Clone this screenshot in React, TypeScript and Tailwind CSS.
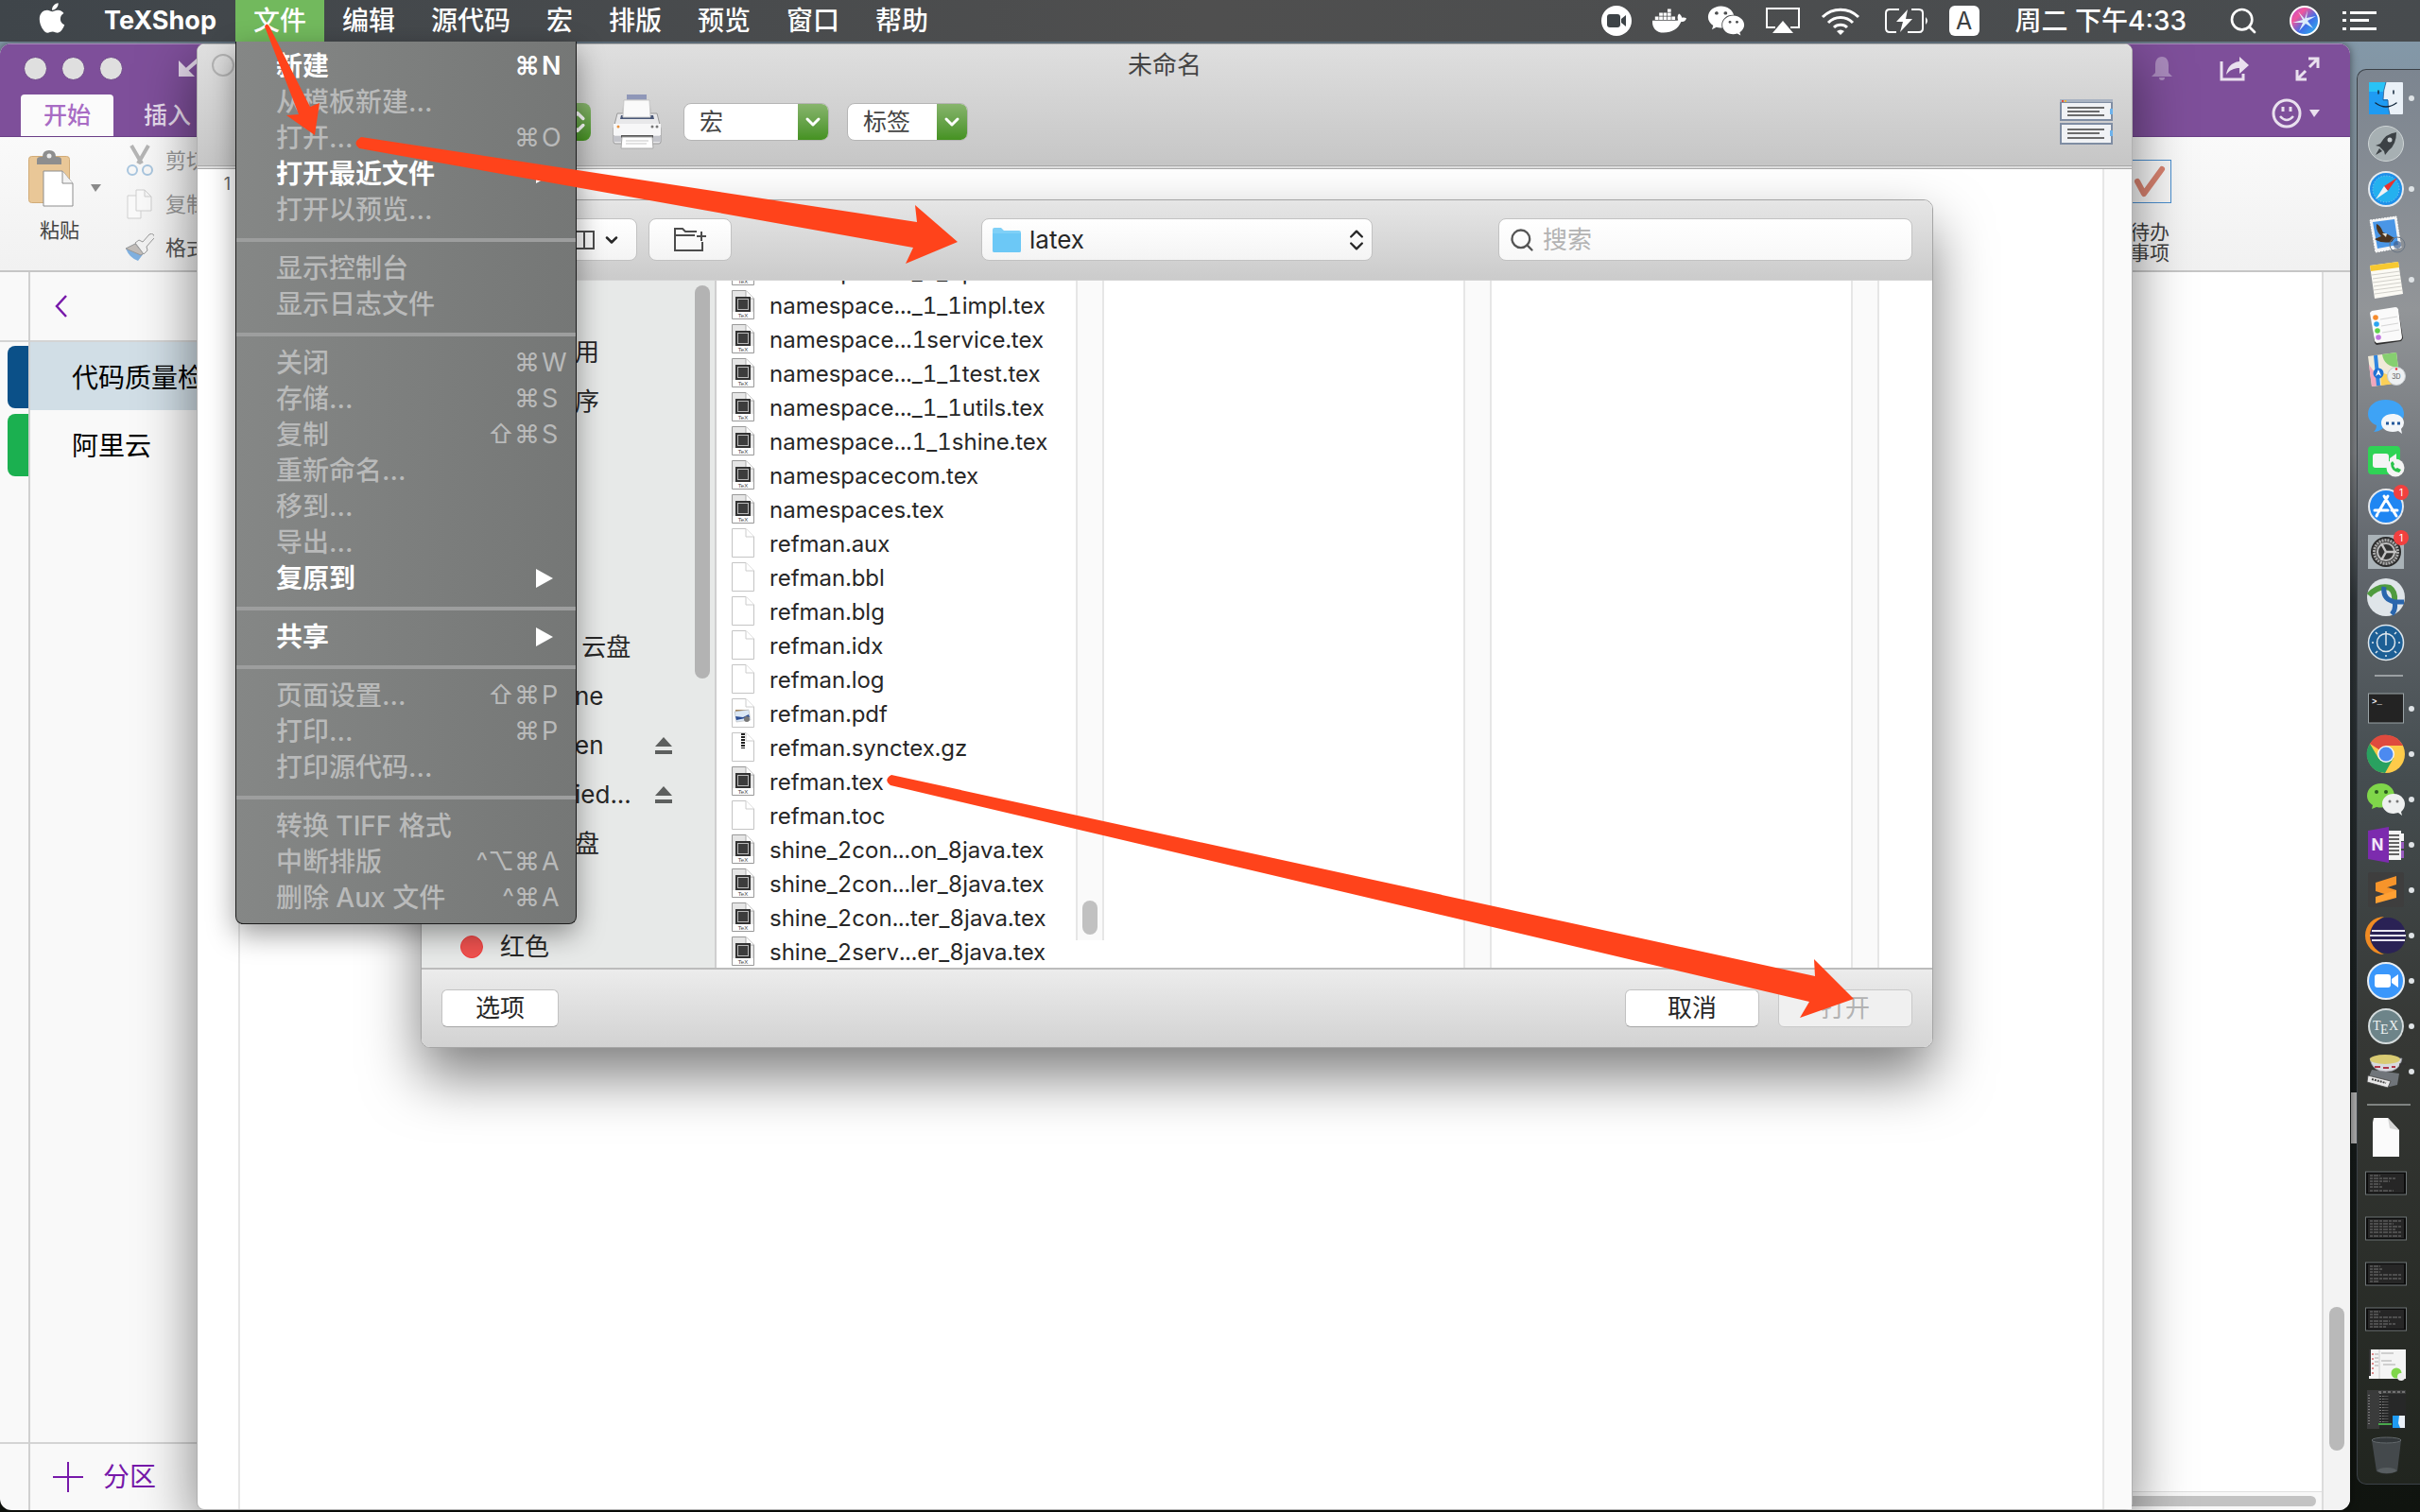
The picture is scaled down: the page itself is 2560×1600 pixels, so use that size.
import React from "react";
import { FaApple, FaDocker, FaWeixin } from "react-icons/fa";
import { ChevronDown, ChevronsUpDown, Search } from "lucide-react";

const FONT = "font-['Inter','Noto_Sans_CJK_SC',sans-serif]";

/* ---------- Menu bar ---------- */

const MENUS = ["编辑", "源代码", "宏", "排版", "预览", "窗口", "帮助"];

type Entry = { label: string; mods?: string; letter?: string; on?: boolean; sub?: boolean };

const FILE_MENU: Entry[][] = [
  [
    { label: "新建", mods: "⌘", letter: "N", on: true },
    { label: "从模板新建..." },
    { label: "打开...", mods: "⌘", letter: "O" },
    { label: "打开最近文件", on: true, sub: true },
    { label: "打开以预览..." },
  ],
  [{ label: "显示控制台" }, { label: "显示日志文件" }],
  [
    { label: "关闭", mods: "⌘", letter: "W" },
    { label: "存储...", mods: "⌘", letter: "S" },
    { label: "复制", mods: "⇧⌘", letter: "S" },
    { label: "重新命名..." },
    { label: "移到..." },
    { label: "导出..." },
    { label: "复原到", on: true, sub: true },
  ],
  [{ label: "共享", on: true, sub: true }],
  [
    { label: "页面设置...", mods: "⇧⌘", letter: "P" },
    { label: "打印...", mods: "⌘", letter: "P" },
    { label: "打印源代码..." },
  ],
  [
    { label: "转换 TIFF 格式" },
    { label: "中断排版", mods: "^⌥⌘", letter: "A" },
    { label: "删除 Aux 文件", mods: "^⌘", letter: "A" },
  ],
];

function FileMenu() {
  return (
    <div
      role="menu"
      className="absolute left-0 top-full w-[361px] rounded-b-lg border border-t-0 border-[#1c1c1c] bg-linear-to-r from-[#858786] to-[#757776] pt-[7px] pb-2 shadow-[0_10px_30px_rgba(0,0,0,0.4)]"
    >
      {FILE_MENU.map((group, g) => (
        <div key={g}>
          {g > 0 && <hr className="mt-[11px] mb-[9px] h-1 border-0 bg-[#9d9e9e]" />}
          {group.map((e) => (
            <button
              key={e.label}
              role="menuitem"
              disabled={!e.on}
              className={
                e.on
                  ? "flex h-[38px] w-full items-center pl-[42px] text-left text-[28px] leading-[38px] font-bold text-white"
                  : "flex h-[38px] w-full items-center pl-[42px] text-left text-[28px] leading-[38px] text-[#b9baba]"
              }
            >
              <span className="flex-1 whitespace-nowrap">{e.label}</span>
              {e.letter && (
                <>
                  <span className={e.on ? "text-[27px] font-semibold" : "text-[27px] font-normal"}>{e.mods}</span>
                  <span className={e.on ? "ml-0.5 w-9 text-[27px] font-semibold" : "ml-0.5 w-9 text-[27px] font-normal"}>{e.letter}</span>
                </>
              )}
              {e.sub && (
                <svg viewBox="0 0 18 20" className="mr-6 h-5 w-[18px]">
                  <path d="M0 0 18 10 0 20Z" fill="#fff" />
                </svg>
              )}
            </button>
          ))}
        </div>
      ))}
    </div>
  );
}

function MenuBar() {
  return (
    <header className="relative z-30 flex h-11 items-center bg-linear-to-r from-[#3f454a] via-[#4f4f4f] to-[#474b4e] text-[28px] leading-[44px] whitespace-nowrap text-white">
      <FaApple className="-mt-1.5 ml-[39px] h-9 w-8" />
      <span className="pr-5 pl-[39px] text-[27px] font-bold">TeXShop</span>
      <nav className="flex h-11 font-medium">
        <div className="relative">
          <button className="h-11 bg-[#72b95d] px-[19px]">文件</button>
          <FileMenu />
        </div>
        {MENUS.map((m) => (
          <button key={m} className="h-11 px-[19px]">
            {m}
          </button>
        ))}
      </nav>
      <div className="mr-[46px] ml-auto flex items-center gap-[22px]">
        <svg viewBox="0 0 32 32" className="size-8">
          <circle cx="16" cy="16" r="16" fill="#fff" />
          <rect x="6" y="9" width="14" height="14" rx="3" fill="#3d4347" />
          <path d="M21 14 26 10V22L21 18Z" fill="#3d4347" />
        </svg>
        <FaDocker className="h-9 w-9" />
        <FaWeixin className="h-9 w-10" />
        <svg viewBox="0 0 36 28" className="h-7 w-9" fill="none" stroke="#fff" strokeWidth="2">
          <path d="M10 21H1V1H35V21H26" />
          <path d="M18 14 29 27H7Z" fill="#fff" stroke="none" />
        </svg>
        <svg viewBox="0 0 42 30" className="mr-1 h-[30px] w-[42px]" fill="none" stroke="#fff" strokeWidth="3">
          <path d="M2 11A27 27 0 0 1 40 11" />
          <path d="M8 17A18 18 0 0 1 34 17" />
          <path d="M14 22A10 10 0 0 1 28 22" />
          <path d="M17 26Q21 23 25 26L21 30Z" fill="#fff" stroke="none" />
        </svg>
        <svg viewBox="0 0 46 26" className="h-[26px] w-[46px]" fill="none" stroke="#fff" strokeWidth="2">
          <path d="M15 1H5Q1 1 1 5V21Q1 25 5 25H12M28 1H36Q40 1 40 5V21Q40 25 36 25H24" />
          <path d="M24 1 12 14H19L16 25 29 11H22Z" fill="#fff" stroke="none" />
          <path d="M43 9Q47 13 43 17Z" fill="#fff" stroke="none" />
        </svg>
        <span className="flex size-8 items-center justify-center rounded-md bg-white text-[25px] text-[#3c3f41]">A</span>
        <time className="ml-4 font-medium">周二 下午4:33</time>
        <Search className="ml-[22px] size-8" strokeWidth={2} />
        <svg viewBox="0 0 32 32" className="mr-0.5 ml-[11px] size-8">
          <defs>
            <linearGradient id="siri" x1="0" y1="0" x2="1" y2="1">
              <stop offset="0" stopColor="#b44be0" />
              <stop offset="0.3" stopColor="#f0569c" />
              <stop offset="0.6" stopColor="#3d6fe8" />
              <stop offset="1" stopColor="#2cc3e8" />
            </linearGradient>
          </defs>
          <circle cx="16" cy="16" r="15" fill="url(#siri)" stroke="#fff" strokeWidth="2" />
          <path d="M16 14 9 6 14 15 3 18 14 18 10 27 17 19 25 24 19 16 28 11 18 13 19 5Z" fill="#e8fbff" opacity="0.9" />
        </svg>
        <svg viewBox="0 0 36 20" className="h-5 w-9">
          <path d="M0 0H4V3H0ZM8 0H36V3H8ZM0 8H4V11H0ZM8 8H28V11H8ZM0 17H4V20H0ZM8 17H36V20H8Z" fill="#fff" />
        </svg>
      </div>
    </header>
  );
}

/* ---------- OneNote window ---------- */

function NotesWindow() {
  return (
    <section className="absolute top-0.5 right-[74px] bottom-0.5 left-0 flex flex-col overflow-hidden rounded-xl bg-[#f9f9f9] shadow-[0_0_10px_rgba(0,0,0,0.5)]">
      <div className="flex h-[99px] justify-between border-t border-[#a98abc] border-b border-b-[#6a3f87] bg-[#7e4f9a]">
        <div className="flex flex-col justify-between">
          <div className="flex h-[50px] items-center gap-[15px] pl-[25px]">
            <span className="size-[25px] rounded-full border border-[#6c4387] bg-[#dfdfdf]" />
            <span className="size-[25px] rounded-full border border-[#6c4387] bg-[#dfdfdf]" />
            <span className="size-[25px] rounded-full border border-[#6c4387] bg-[#dfdfdf]" />
            <svg viewBox="0 0 22 20" className="ml-11 h-5 w-[22px]" fill="none" stroke="#e4d9ea" strokeWidth="4">
              <path d="M22 0 6 14" />
              <path d="M0 2V19H17Z" fill="#e4d9ea" stroke="none" />
            </svg>
          </div>
          <div className="flex h-11 pl-[22px] text-[25px] leading-[44px] font-medium">
            <button className="w-[98px] rounded-t bg-[#fbfbfb] text-[#a86cc4]">开始</button>
            <button className="w-[114px] text-[#e6dbec]">插入</button>
          </div>
        </div>
        <div className="flex flex-col items-end pt-[13px] pr-8">
          <div className="flex items-center gap-[49px]">
            <svg viewBox="0 0 24 26" className="h-[26px] w-6" fill="#a98abc">
              <path d="M12 0C7 0 5 4 5 9V17L1 21H23L19 17V9C19 4 17 0 12 0ZM9 22H15A3 3 0 0 1 9 22Z" />
            </svg>
            <svg viewBox="0 0 31 26" className="h-[26px] w-[31px]" fill="none" stroke="#e9e0ee" strokeWidth="3">
              <path d="M2 5V24H25V18" />
              <path d="M31 9 21 0V5C12 6 8 12 7 19 11 14 15 12 21 12V18Z" fill="#e9e0ee" stroke="none" />
            </svg>
            <svg viewBox="0 0 26 26" className="h-[26px] w-[26px]" fill="none" stroke="#e9e0ee" strokeWidth="3">
              <path d="M14 2H24V12M24 2 15 11M2 14V24H12M2 24 11 15" />
            </svg>
          </div>
          <div className="mt-[18px] flex items-center gap-2">
            <svg viewBox="0 0 32 32" className="size-8" fill="none" stroke="#e9e0ee" strokeWidth="3">
              <circle cx="16" cy="16" r="14" />
              <path d="M12 9V14M20 9V14" />
              <path d="M9 19Q16 27 23 19" strokeWidth="2.5" />
            </svg>
            <svg viewBox="0 0 11 8" className="h-2 w-[11px]">
              <path d="M0 0H11L5 8Z" fill="#e9e0ee" />
            </svg>
          </div>
        </div>
      </div>

      <div className="flex h-[143px] justify-between border-b-2 border-[#c6c6c6] bg-linear-to-b from-[#fafafa] to-[#f1f1f1]">
        <div className="flex">
          <button className="flex flex-col items-center pt-3.5 pl-[30px] text-[21px] leading-8 text-[#444]">
            <span className="flex items-center gap-[18px]">
              <svg viewBox="0 0 48 60" className="h-[60px] w-12">
                <rect x="0.5" y="6.500" width="43" height="49" rx="3" fill="#e9c797" stroke="#d1ab77" />
                <path d="M9 15V10Q9 7 13 7H15Q15 0 22 0T29 7H31Q35 7 35 10V15Z" fill="#8e8e8e" />
                <circle cx="22" cy="6" r="2.500" fill="#eee" />
                <path d="M16 22H36L47 35V59H16Z" fill="#fff" stroke="#8d8d8d" />
                <path d="M36 22V35H47" fill="#f3f3f3" stroke="#8d8d8d" />
              </svg>
              <svg viewBox="0 0 11 8" className="mt-5 h-2 w-[11px]">
                <path d="M0 0H11L5 8Z" fill="#8a8a8a" />
              </svg>
            </span>
            <span className="mt-[9px] w-full pl-3 text-left">粘贴</span>
          </button>
          <div className="flex flex-col pt-0.5 pl-[26px] text-[22px] leading-[46px] text-[#9a9a9a]">
            <button className="flex items-center gap-3">
              <svg viewBox="0 0 30 34" className="h-[34px] w-[30px]" fill="none">
                <path d="M6 1 17 20M24 1 13 20" stroke="#b5b5b5" strokeWidth="4" />
                <circle cx="7" cy="27" r="5" stroke="#a9c6df" strokeWidth="2" />
                <circle cx="23" cy="27" r="5" stroke="#a9c6df" strokeWidth="2" />
              </svg>
              剪切
            </button>
            <button className="flex items-center gap-3">
              <svg viewBox="0 0 30 34" className="h-[34px] w-[30px]" fill="#fafafa" stroke="#cfcfcf">
                <path d="M2 8H16V32H2Z" />
                <path d="M11 2H20L27 9V24H11ZM20 2V9H27" />
              </svg>
              复制
            </button>
            <button className="flex items-center gap-3 text-[#555]">
              <svg viewBox="0 0 30 30" className="h-[30px] w-[30px]">
                <path d="M0 16 10 11 19 21 13 29Q4 26 0 16Z" fill="#7fb0e0" />
                <path d="M0 16 10 11 19 21 16 23Z" fill="#c2bdb9" stroke="#999" />
                <path d="M10 10 14 7 18 9 25 1Q28 -1 30 2T29 6L22 14 23 18 19 22Z" fill="#f2f2f2" stroke="#999" />
              </svg>
              格式
            </button>
          </div>
        </div>
        <button className="mr-[189px] flex flex-col items-end pt-6 text-[21px] leading-[22px] text-[#3f3f3f]">
          <svg viewBox="0 0 46 46" className="mb-5 size-[46px]" fill="none">
            <rect x="0.5" y="0.5" width="45" height="45" fill="#f7f7f7" stroke="#4a8fd0" />
            <path d="M10 23 17 36 36 10" stroke="#d98370" strokeWidth="6" strokeLinecap="round" strokeLinejoin="round" />
          </svg>
          <span className="mr-0.5">待办</span>
          <span className="mr-0.5">事项</span>
        </button>
      </div>

      <div className="flex min-h-0 flex-1">
        <div className="flex w-8 flex-col items-end border-r-2 border-[#d0d0d0]">
          <span className="mb-1 h-[74px] w-full border-b-2 border-[#d4d4d4]" />
          <span className="mb-1.5 h-[66px] w-[22px] rounded-l-lg bg-[#0b5088]" />
          <span className="h-[66px] w-[22px] rounded-l-lg bg-[#1bb050]" />
          <span className="mt-auto h-[72px] w-full border-t-2 border-[#d4d4d4]" />
        </div>
        <div className="flex w-[400px] flex-col text-[28px] leading-[76px] text-black">
          <div className="flex h-[74px] items-center border-b-2 border-[#d4d4d4] pl-[26px]">
            <svg viewBox="0 0 14 24" className="h-6 w-3.5" fill="none" stroke="#7719aa" strokeWidth="2.500">
              <path d="M12 1 2 12 12 23" />
            </svg>
          </div>
          <button className="h-[72px] w-full bg-[#d1dee6] pl-11 text-left whitespace-nowrap">代码质量检</button>
          <button className="h-[72px] w-full pl-11 text-left">阿里云</button>
          <button className="mt-auto flex h-[72px] items-center gap-5 border-t-2 border-[#d4d4d4] pl-[23px] text-[#7719aa]">
            <svg viewBox="0 0 34 34" className="size-[34px]" stroke="#7719aa" strokeWidth="2">
              <path d="M17 1V33M1 17H33" />
            </svg>
            分区
          </button>
        </div>
        <div className="flex flex-1 flex-col bg-white">
          <div className="flex-1" />
          <div className="flex h-5 items-center justify-end border-t border-[#e0e0e0] bg-[#f8f8f8] pr-1.5">
            <span className="h-[11px] w-[500px] rounded-full bg-[#c3c3c3]" />
          </div>
        </div>
        <div className="flex w-[30px] flex-col items-center justify-end border-l-2 border-[#dcdcdc] bg-[#f3f3f3] pb-[63px]">
          <span className="h-[152px] w-4 rounded-full bg-[#b9b9b9]" />
        </div>
      </div>
    </section>
  );
}

/* ---------- Open dialog ---------- */

const FILES: [string, string][] = [
  ["namespace..._1_1port.tex", "tex"],
  ["namespace..._1_1impl.tex", "tex"],
  ["namespace...1service.tex", "tex"],
  ["namespace..._1_1test.tex", "tex"],
  ["namespace..._1_1utils.tex", "tex"],
  ["namespace...1_1shine.tex", "tex"],
  ["namespacecom.tex", "tex"],
  ["namespaces.tex", "tex"],
  ["refman.aux", "doc"],
  ["refman.bbl", "doc"],
  ["refman.blg", "doc"],
  ["refman.idx", "doc"],
  ["refman.log", "doc"],
  ["refman.pdf", "pdf"],
  ["refman.synctex.gz", "zip"],
  ["refman.tex", "tex"],
  ["refman.toc", "doc"],
  ["shine_2con...on_8java.tex", "tex"],
  ["shine_2con...ler_8java.tex", "tex"],
  ["shine_2con...ter_8java.tex", "tex"],
  ["shine_2serv...er_8java.tex", "tex"],
];

function FileIcon({ kind }: { kind: string }) {
  const tex = kind === "tex";
  return (
    <svg viewBox="0 0 24 31" className="-mt-1 h-[31px] w-6 shrink-0">
      <path d="M0.500 0.500H15L23.500 9V30.500H0.500Z" fill={tex ? "#e6e6e6" : "#fff"} stroke={tex ? "#999" : "#c4c4c4"} />
      {tex && <path d="M1 23H23V30H1Z" fill="#fff" />}
      <path d="M15 0.500V9H23.500" fill="#fff" stroke={tex ? "#aaa" : "#ccc"} />
      {tex && (
        <>
          <rect x="4" y="7" width="16" height="16" fill="#333" />
          <rect x="6.500" y="9.500" width="11" height="11" fill="#3c3c3c" stroke="#bbb" />
          <text x="12" y="28.500" fontSize="6" textAnchor="middle" fill="#444" fontFamily="Liberation Sans">
            TeX
          </text>
        </>
      )}
      {kind === "pdf" && (
        <>
          <path d="M4 12H17V15H4Z" fill="#a4865d" />
          <path d="M3 14 18 12 20 23 5 25Z" fill="#dce8f5" stroke="#aaa" strokeWidth="0.500" />
          <path d="M4 19 12 20 18 17 19 20 5 23Z" fill="#2c4d94" />
          <circle cx="16" cy="22" r="3" fill="#777" />
        </>
      )}
      {kind === "zip" && <path d="M12 1V17" stroke="#222" strokeWidth="4" strokeDasharray="2 1" />}
    </svg>
  );
}

const PLACES: [string, boolean][] = [
  ["用", false],
  ["序", false],
  ["", false],
  ["", false],
  ["", false],
  ["", false],
  ["\u00a0云盘", false],
  ["ne", false],
  ["en", true],
  ["ied...", true],
  ["盘", false],
];

function OpenDialog() {
  return (
    <div
      role="dialog"
      aria-label="打开"
      className="absolute top-[164px] right-[210px] left-[236px] flex flex-col overflow-hidden rounded-[10px] border border-[#a5a5a5] bg-white text-[26px] text-[#272727] shadow-[0_30px_60px_rgba(0,0,0,0.5)]"
    >
      <div className="flex h-[85px] items-start border-b border-[#d4d4d4] bg-linear-to-b from-[#e6e6e6] to-[#cbcbcb] pt-[19px]">
        <button aria-label="显示方式" className="ml-[124px] flex h-[45px] w-[104px] items-center justify-end gap-2 rounded-lg border border-[#c2c2c2] bg-linear-to-b from-white to-[#f4f4f4] pr-4">
          <svg viewBox="0 0 32 20" className="h-5 w-8" fill="none" stroke="#4c4c4c" strokeWidth="2">
            <path d="M1 1H31V19H1ZM11 1V19M21 1V19" />
          </svg>
          <ChevronDown className="size-5" strokeWidth={3} />
        </button>
        <button aria-label="新建文件夹" className="ml-3 flex h-[45px] w-[88px] items-center justify-center rounded-lg border border-[#c2c2c2] bg-linear-to-b from-white to-[#f4f4f4]">
          <svg viewBox="0 0 34 25" className="h-[25px] w-[34px]" fill="none" stroke="#4c4c4c" strokeWidth="2">
            <path d="M30 15V24H1V1H9L12 4H24M1 8H22M24 9H34M29 4V14" />
          </svg>
        </button>
        <label className="relative ml-[264px] flex h-[45px] w-[414px] items-center rounded-lg border border-[#c2c2c2] bg-linear-to-b from-white to-[#f4f4f4] pl-2.5">
          <svg viewBox="0 0 32 26" className="h-[26px] w-8">
            <path d="M1 2Q1 0 3 0H10L13 3H29Q31 3 31 5V24Q31 26 29 26H3Q1 26 1 24Z" fill="#7fd0f7" />
            <path d="M1 6H31V24Q31 26 29 26H3Q1 26 1 24Z" fill="#6cc8f6" />
          </svg>
          <select aria-label="文件夹" className="flex-1 appearance-none bg-transparent pl-2 leading-[43px] outline-none">
            <option>latex</option>
          </select>
          <ChevronsUpDown className="pointer-events-none absolute right-0.5 size-7" strokeWidth={2} />
        </label>
        <label className="mr-[21px] ml-auto flex h-[45px] w-[438px] items-center gap-2 rounded-lg border border-[#c2c2c2] bg-linear-to-b from-white to-[#f8f8f8] pl-2.5">
          <Search className="size-7 text-[#555]" strokeWidth={2} />
          <input aria-label="搜索" placeholder="搜索" className="min-w-0 flex-1 bg-transparent leading-[43px] outline-none placeholder:text-[#b3b3b3]" />
        </label>
      </div>

      <div className="flex h-[729px] border-b-2 border-[#bcbcbc]">
        <div className="flex w-[312px] shrink-0 border-r-2 border-[#cfcfcf] bg-[#e7e9e8]">
          <ul className="flex flex-1 flex-col pt-[50px] leading-[52px]">
            {PLACES.map(([name, eject], i) => (
              <li key={i} className="flex h-[52px] items-center justify-between pr-6 pl-[162px]">
                {name}
                {eject && (
                  <svg viewBox="0 0 18 18" className="h-[18px] w-[18px]">
                    <path d="M9 0 18 10H0ZM0 14H18V18H0Z" fill="#5d5f5e" />
                  </svg>
                )}
              </li>
            ))}
            <li className="mt-auto flex h-[44px] items-center gap-[18px] pl-[41px]">
              <span className="size-6 rounded-full border border-[#f23c3c] bg-[#f0524f]" />
              红色
            </li>
          </ul>
          <span className="mt-[5px] mr-[5px] h-[416px] w-4 rounded-full bg-[#b3b3b3]" />
        </div>
        <div className="flex w-[410px] shrink-0 overflow-hidden">
          <ul className="-mt-[27px] flex-1">
            {FILES.map(([name, kind]) => (
              <li key={name} className="flex h-9 items-center gap-4 pl-4 text-[24px] leading-9 whitespace-nowrap tabular-nums">
                <FileIcon kind={kind} />
                {name}
              </li>
            ))}
          </ul>
          <div className="flex h-[698px] w-[30px] flex-col items-center justify-end border-x-2 border-[#e6e6e6] bg-[#fafafa] pb-1.5">
            <span className="h-9 w-4 rounded-full bg-[#c1c1c1]" />
          </div>
        </div>
        <div className="flex w-[410px] shrink-0 justify-end">
          <div className="w-[30px] border-x-2 border-[#e6e6e6] bg-[#fafafa]" />
        </div>
        <div className="flex w-[410px] shrink-0 justify-end">
          <div className="w-[30px] border-x-2 border-[#e6e6e6] bg-[#fafafa]" />
        </div>
      </div>

      <div className="flex h-[82px] items-center gap-5 bg-linear-to-b from-[#ececec] to-[#d2d2d2] px-[21px]">
        <button className="h-10 w-[124px] rounded-md border border-[#c2c2c2] border-b-[#a6a6a6] bg-white leading-[38px]">选项</button>
        <button className="ml-auto h-10 w-[142px] rounded-md border border-[#c2c2c2] border-b-[#a6a6a6] bg-white leading-[38px]">取消</button>
        <button disabled className="h-10 w-[142px] rounded-md border border-[#c9c9c9] bg-[#f0f0f0] leading-[38px] text-[#b2b2b2]">
          打开
        </button>
      </div>
    </div>
  );
}

/* ---------- TeXShop window ---------- */

function Combo({ label, wide }: { label: string; wide?: boolean }) {
  return (
    <label
      className={
        wide
          ? "relative flex h-10 w-[154px] overflow-hidden rounded-lg border border-[#b5b5b5] bg-white"
          : "relative flex h-10 w-[128px] overflow-hidden rounded-lg border border-[#b5b5b5] bg-white"
      }
    >
      <select aria-label={label} className="w-full appearance-none bg-transparent pl-4 text-[25px] leading-[38px] text-[#444] outline-none">
        <option>{label}</option>
      </select>
      <span className="pointer-events-none absolute inset-y-0 right-0 flex w-8 items-center justify-center bg-linear-to-b from-[#87b46c] to-[#459220]">
        <ChevronDown className="size-6 text-white" strokeWidth={3} />
      </span>
    </label>
  );
}

function EditorWindow() {
  return (
    <section className="absolute top-0.5 right-[304px] bottom-0.5 left-[208px] flex flex-col rounded-lg border border-[#b0b0b0] bg-white shadow-[0_20px_60px_rgba(0,0,0,0.5)]">
      <div className="flex h-[132px] flex-col rounded-t-lg border-b-4 border-double border-[#a9a9a9] bg-linear-to-b from-[#dfdfdf] to-[#c6c6c6]">
        <div className="flex h-11 items-center pr-[39px] pl-[15px]">
          <span className="size-6 rounded-full border-2 border-[#b2b2b2]" />
          <h1 className="flex-1 text-center text-[26px] leading-11 text-[#444]">未命名</h1>
        </div>
        <div className="flex flex-1 items-center pr-5 pb-2 pl-[351px]">
          <button aria-label="排版" className="flex h-10 w-[65px] items-center justify-end rounded-lg bg-linear-to-b from-[#87b46c] to-[#459220]">
            <ChevronsUpDown className="size-7 text-white" strokeWidth={3} />
          </button>
          <button aria-label="打印" className="ml-[23px]">
            <svg viewBox="0 0 52 58" className="h-[58px] w-[52px]">
              <path d="M15 0H36V8H15Z" fill="#8f97b8" />
              <path d="M12 6H39L41 26H10Z" fill="#fafafa" stroke="#bbb" />
              <path d="M5 20H47L51 36V50Q51 52 49 52H3Q1 52 1 50V36Z" fill="#e8e8ea" stroke="#999" />
              <path d="M9 22H43L44 26H8Z" fill="#4a5878" />
              <path d="M12 6H39L40 24H11Z" fill="#fafafa" stroke="#ccc" />
              <path d="M1 31H51V43H1Z" fill="#f7f7f8" />
              <path d="M1 44H51V50H1Z" fill="#c3c4ca" />
              <path d="M9 43H43V46H9Z" fill="#555" />
              <path d="M10 45H42L43 57H9Z" fill="#fff" stroke="#aaa" />
              <path d="M14 49H38M14 52H36" stroke="#c5c5c5" />
              <circle cx="6" cy="34" r="1.500" fill="#e8903c" />
              <circle cx="42" cy="34" r="1.500" fill="#777" />
              <circle cx="47" cy="34" r="1.500" fill="#777" />
            </svg>
          </button>
          <div className="ml-[23px] flex gap-[19px]">
            <Combo label="宏" wide />
            <Combo label="标签" />
          </div>
          <button aria-label="分栏" className="ml-auto">
            <svg viewBox="0 0 56 48" className="h-12 w-14">
              <path d="M0 0H56V23H0ZM0 25H56V48H0Z" fill="#7f8da3" />
              <path d="M2 4H54V21H2ZM2 27H54V46H2Z" fill="#f0f2f5" />
              <path d="M0 0H56V3H0Z" fill="#a9b3c2" />
              <path d="M2 1H4V3H2Z" fill="#e6503c" />
              <path d="M5 1H7V3H5Z" fill="#e8b93a" />
              <path d="M8 9H47M8 13H42M8 17H47M8 32H47M8 36H42M8 41H47" stroke="#6b6b6b" strokeWidth="2" />
              <path d="M53 10H56V16H53ZM53 33H56V39H53Z" fill="#6cb2ec" />
            </svg>
          </button>
        </div>
      </div>
      <div className="flex flex-1">
        <div className="w-[45px] border-r-2 border-[#e6e6e6] pt-1 pr-2 text-right text-[18px] leading-6 text-[#666]">1</div>
        <div className="flex-1" />
        <div className="w-[31px] border-l-2 border-[#e6e6e6] bg-[#fafafa]" />
      </div>
      <OpenDialog />
    </section>
  );
}

/* ---------- Dock ---------- */

function Badge() {
  return (
    <>
      <circle cx="36" cy="5" r="8" fill="#f2403f" />
      <text x="36" y="8.500" fontSize="10" textAnchor="middle" fill="#fff" fontFamily="Inter">
        1
      </text>
    </>
  );
}

const terminalThumb = (rows: string) => (
  <>
    <rect x="-1.500" y="8" width="43" height="24" fill="#0c0c0c" stroke="#6e7577" />
    <rect x="1" y="10" width="38" height="20" fill="#262626" />
    <path d={rows} stroke="#777" strokeWidth="1" strokeDasharray="3 1 5 1" />
  </>
);

type DockItem = { name: string; dot?: boolean; art: React.ReactNode };

const APPS: DockItem[] = [
  {
    name: "Finder",
    dot: true,
    art: (
      <>
        <rect x="2" y="3" width="36" height="34" rx="1" fill="#eaf1f8" />
        <path d="M2 3H20Q17 11 17 21H22Q22 30 24 37H2Z" fill="#1e9bf3" />
        <path d="M2 3H20Q18 8 17.500 13H2Z" fill="#29c3f6" />
        <path d="M20 3Q17 11 17 22H22Q22 31 24 37" fill="none" stroke="#27588a" strokeWidth="0.800" />
        <path d="M9 25Q20 33 31 25M12 12V15M28 12V15" fill="none" stroke="#13283d" strokeWidth="1.500" strokeLinecap="round" />
      </>
    ),
  },
  {
    name: "Launchpad",
    art: (
      <>
        <circle cx="20" cy="20" r="18.500" fill="#a7b0b3" stroke="#cfd5d6" />
        <path d="M31 8Q20 9 14 20L9 22 13 23 18 28 19 32 23 27Q31 21 31 8Z" fill="#3c4145" />
        <circle cx="24" cy="16" r="2.500" fill="#c7cdd0" />
        <path d="M13 25 9 32 16 28Z" fill="#3c4145" />
      </>
    ),
  },
  {
    name: "Safari",
    dot: true,
    art: (
      <>
        <circle cx="20" cy="20" r="18" fill="#1f8fe8" stroke="#e6eaee" strokeWidth="2" />
        <circle cx="20" cy="20" r="14" fill="#24b1ef" stroke="#8dcdf7" strokeDasharray="1 2" />
        <path d="M32 8 18 17 22 22Z" fill="#e8322e" />
        <path d="M9 31 18 17 22 22Z" fill="#eef2f5" />
      </>
    ),
  },
  {
    name: "邮件",
    art: (
      <>
        <path d="M3 5 31 1 36 34 9 39Z" fill="#f4f4f4" stroke="#fff" strokeDasharray="2 1" />
        <path d="M6 7 29 4 33 31 11 35Z" fill="#4a96e6" />
        <path d="M10 9Q14 10 17 18L22 20 29 24 26 28Q15 30 8 25L15 22Q9 16 10 9Z" fill="#4a3420" />
        <path d="M16 19 21 19 20 23Z" fill="#e8e0d0" />
        <circle cx="32" cy="31" r="8" fill="none" stroke="#6b7684" />
        <circle cx="32" cy="31" r="4" fill="#3e5e8c" opacity="0.700" />
      </>
    ),
  },
  {
    name: "备忘录",
    dot: true,
    art: (
      <>
        <path d="M3 5 33 1 38 35 8 40Z" fill="#fbfaf4" />
        <path d="M3 5 33 1 34 7 4 11Z" fill="#f7c931" />
        <path d="M5 15 35 11M6 19 35 15M6 23 36 19M7 27 36 23M7 31 37 27M8 35 37 31" stroke="#c7c5bf" strokeWidth="0.800" />
      </>
    ),
  },
  {
    name: "提醒事项",
    art: (
      <>
        <path d="M5 6 31 2Q33 2 33 4L38 34 36 37 10 41 8 39 4 8Z" fill="#2f2f2f" />
        <path d="M5 5 30 1Q32 1 33 3L37 33Q37 35 35 36L10 39 8 37 3 7Z" fill="#fafafa" />
        <circle cx="9" cy="12" r="2.800" fill="#f58b2c" />
        <circle cx="10" cy="19" r="2.800" fill="#2aa5f2" />
        <circle cx="11" cy="26" r="2.800" fill="#5fd14b" />
        <circle cx="12" cy="33" r="2.800" fill="#c175e0" />
        <path d="M14 14 32 11M15 21 33 18M16 28 34 25" stroke="#d5d5d5" />
      </>
    ),
  },
  {
    name: "地图",
    art: (
      <>
        <path d="M1 5 31 1 35 33 5 37Z" fill="#f0ead8" />
        <path d="M16 3 31 1 33 17Q18 16 16 3Z" fill="#86cf70" />
        <path d="M5 37 2 14 8 22 12 36Z" fill="#f2a7bd" />
        <path d="M14 22 34 28 35 33 15 36Z" fill="#fbd058" />
        <path d="M9 4 12 36" stroke="#2f86e0" strokeWidth="4" />
        <circle cx="12" cy="23" r="5.500" fill="#1f72d4" />
        <path d="M12 19 15 26 12 24 9 26Z" fill="#fff" />
        <circle cx="31" cy="26" r="9.500" fill="#edf0f2" stroke="#c7ccd0" />
        <circle cx="31" cy="18.500" r="1.200" fill="#e33" />
        <text x="31" y="29" fontSize="7" textAnchor="middle" fill="#555" fontFamily="Inter">
          3D
        </text>
      </>
    ),
  },
  {
    name: "信息",
    art: (
      <>
        <path d="M20 3C9 3 1 9 1 18 1 24 5 28 10 30 10 34 8 36 7 37 12 37 16 34 18 32 30 32 39 27 39 18S31 3 20 3Z" fill="#3ea3f6" />
        <path d="M27 18C20 18 15 22 15 27.500S20 37 27 37Q30 37 33 36L37 39 36 34Q39 31 39 27.500C39 22 34 18 27 18Z" fill="#f3f6f9" />
        <path d="M20 26.500H23V29.500H20ZM26 26.500H29V29.500H26ZM32 26.500H35V29.500H32Z" fill="#24599c" />
      </>
    ),
  },
  {
    name: "FaceTime",
    art: (
      <>
        <rect x="1" y="4" width="34" height="30" rx="4" fill="#2fd355" />
        <rect x="6" y="12" width="17" height="15" rx="3" fill="#f4f4f4" />
        <path d="M24 17 31 12V26L24 22Z" fill="#f4f4f4" />
        <circle cx="30" cy="27" r="9.500" fill="#f4f4f4" />
        <path d="M25 22Q25 31 34 32L36 29 32 27 30 28 28 25 29 23 27 20Z" fill="#2bc24c" />
      </>
    ),
  },
  {
    name: "App Store",
    art: (
      <>
        <circle cx="20" cy="20" r="18" fill="#1f86f2" stroke="#e5e9ee" strokeWidth="2" />
        <path d="M22 9 12 26M18 9 31 30M8 24H22M26 24H32M11 28 10 30" stroke="#fff" strokeWidth="3" strokeLinecap="round" />
        <Badge />
      </>
    ),
  },
  {
    name: "系统偏好设置",
    art: (
      <>
        <rect x="1" y="2" width="38" height="36" fill="#aab3b8" />
        <circle cx="20" cy="20" r="16" fill="#2c2c2c" />
        <circle cx="20" cy="20" r="12.500" fill="#4b4b4b" stroke="#a9a9a9" strokeWidth="3" strokeDasharray="2 1" />
        <circle cx="20" cy="20" r="9" fill="#333" stroke="#bbb" strokeWidth="2" />
        <path d="M20 20 15 11M20 20 31 20M20 20 15 29" stroke="#c4c4c4" strokeWidth="2.500" />
        <Badge />
      </>
    ),
  },
  {
    name: "AnyConnect",
    art: (
      <>
        <circle cx="20" cy="20" r="20" fill="#dfe5e9" />
        <path d="M2 18Q12 7 24 10 30 14 29 24" stroke="#4f9b3e" strokeWidth="6" />
        <path d="M18 9Q16 22 29 25L39 25M29 25Q31 33 26 38" stroke="#2a66ad" strokeWidth="5" />
      </>
    ),
  },
  {
    name: "定时器",
    art: (
      <>
        <circle cx="20" cy="20" r="18.500" fill="#1d5f95" stroke="#dfe7ed" strokeWidth="1.500" />
        <circle cx="20" cy="20" r="9.500" fill="none" stroke="#dfe7ed" strokeWidth="1.500" />
        <path d="M20 8V23M7 20H5M35 20H33M11 11 9 9M29 11 31 9M11 29 9 31M29 29 31 31M20 33V35" stroke="#dfe7ed" strokeWidth="1.500" />
      </>
    ),
  },
];

const RUNNING: DockItem[] = [
  {
    name: "终端",
    dot: true,
    art: (
      <>
        <rect x="1.500" y="4" width="37" height="31" fill="#232323" stroke="#9aa3a6" />
        <text x="5" y="15" fontSize="9" fontWeight="bold" fill="#f2f2f2" fontFamily="Liberation Mono">
          {">_"}
        </text>
      </>
    ),
  },
  {
    name: "Chrome",
    dot: true,
    art: (
      <>
        <circle cx="20" cy="20" r="20" fill="#fdcb4a" />
        <path d="M20 20 3 9A20 20 0 0 1 38 11H20Z" fill="#df4a3e" />
        <path d="M3 9 13 26 20 29 19 40A20 20 0 0 1 3 9Z" fill="#29a160" />
        <path d="M28 24 19 40 12 25Z" fill="#29a160" />
        <circle cx="20" cy="20" r="9" fill="#f3f3f3" />
        <circle cx="20" cy="20" r="7.500" fill="#4c8af0" />
      </>
    ),
  },
  {
    name: "微信",
    dot: true,
    art: (
      <>
        <path d="M15 3C6 3 0 9 0 16 0 21 3 24 6 26L5 30 10 28Q20 30 26 24 29 20 29 16C29 9 23 3 15 3Z" fill="#7fd64a" />
        <circle cx="10" cy="12" r="2" fill="#2a5b1e" />
        <circle cx="20" cy="12" r="2" fill="#2a5b1e" />
        <path d="M28 14C21 14 16 19 16 24.500S21 35 28 35L33 34 37 37 36 33Q40 30 40 24.500C40 19 35 14 28 14Z" fill="#eef0f0" />
        <circle cx="24" cy="22" r="1.500" fill="#777" />
        <circle cx="32" cy="22" r="1.500" fill="#777" />
      </>
    ),
  },
  {
    name: "OneNote",
    dot: true,
    art: (
      <>
        <path d="M20 5H36V36H20Z" fill="#f4f4f4" />
        <path d="M36 8H39V16H36Z" fill="#f4f4f4" />
        <path d="M36 17H39V24H36ZM36 26H39V34H36Z" fill="#9a5cc0" />
        <path d="M22 10H34M22 14H34M22 18H34M22 22H34M22 26H34M22 30H34" stroke="#333" strokeWidth="1.500" />
        <path d="M1 5 23 1V39L1 35Z" fill="#7c2bae" />
        <text x="11" y="26" fontSize="17" fontWeight="bold" textAnchor="middle" fill="#f2e6f8" fontFamily="Inter">
          N
        </text>
      </>
    ),
  },
  {
    name: "Sublime Text",
    dot: true,
    art: (
      <>
        <rect x="1" y="1" width="38" height="37" rx="2" fill="#3e3e3e" />
        <path d="M9 12 31 5V14L9 21ZM9 13 31 20V28L9 21Z" fill="#f7942a" />
        <path d="M9 27 31 20V28L9 34Z" fill="#ffa033" />
      </>
    ),
  },
  {
    name: "Eclipse",
    dot: true,
    art: (
      <>
        <path d="M18 0A20 20 0 0 0 18 40Q4 34 5 20 5 6 18 0Z" fill="#f08b23" />
        <circle cx="22" cy="20" r="19" fill="#2a2255" />
        <path d="M5 15H40M3 20H41M5 25H40" stroke="#e8e5f0" strokeWidth="2" />
      </>
    ),
  },
  {
    name: "Zoom",
    dot: true,
    art: (
      <>
        <circle cx="20" cy="20" r="19" fill="#3a97fb" stroke="#e8edf2" strokeWidth="2" />
        <rect x="8" y="13" width="17" height="14" rx="3" fill="#fff" />
        <path d="M26 18 33 13V27L26 22Z" fill="#fff" />
      </>
    ),
  },
  {
    name: "TeX",
    dot: true,
    art: (
      <>
        <circle cx="20" cy="20" r="18" fill="#6d8489" stroke="#d4dbdc" strokeWidth="2" />
        <text x="6" y="24" fontSize="14" fill="#eef2f2" fontFamily="Liberation Serif">
          T
        </text>
        <text x="14" y="28" fontSize="14" fill="#eef2f2" fontFamily="Liberation Serif">
          E
        </text>
        <text x="23" y="24" fontSize="14" fill="#eef2f2" fontFamily="Liberation Serif">
          X
        </text>
      </>
    ),
  },
  {
    name: "TeXShop",
    dot: true,
    art: (
      <>
        <path d="M5 18 34 22 32 34 24 36 1 28Z" fill="#70757a" />
        <path d="M1 24 25 30 22 37 0 31Z" fill="#e9e9e9" stroke="#444" strokeWidth="0.800" />
        <path d="M5 28 20 32" stroke="#444" strokeWidth="2" strokeDasharray="2 1" />
        <path d="M3 6H37Q35 20 20 20T3 6Z" fill="#d7d9df" stroke="#8a8d96" strokeWidth="0.800" />
        <ellipse cx="19" cy="7" rx="16" ry="5" fill="#d9cb73" />
        <path d="M8 15H14M17 16H23M26 15H30" stroke="#b0384a" strokeWidth="2" />
        <path d="M35 16V12H41" stroke="#333" strokeWidth="1.500" fill="none" />
      </>
    ),
  },
];

const RECENT: DockItem[] = [
  {
    name: "文稿",
    art: (
      <>
        <path d="M7 -1H22L34 12V40H6V4Z" fill="#fbfbfb" />
        <path d="M22 -1 24 10 34 12Z" fill="#d5d5d5" />
      </>
    ),
  },
  { name: "终端 1", art: terminalThumb("M3 12H14M3 15H30M3 18H24M3 21H14M3 24H16M3 28H28") },
  { name: "终端 2", art: terminalThumb("M3 12H36M3 15H28M3 18H37M3 21H30M3 24H37M3 28H37") },
  { name: "终端 3", art: terminalThumb("M3 12H14M3 15H16M3 18H14M3 21H37M3 25H37M3 28H12") },
  { name: "终端 4", art: terminalThumb("M3 12H14M3 15H12M3 18H37M3 22H24M3 25H30M3 28H20") },
  {
    name: "微信窗口",
    art: (
      <>
        <rect x="2" y="4" width="39" height="31" fill="#f4f4f4" />
        <path d="M2 4H4V32H2Z" fill="#333" />
        <path d="M6 8V32" stroke="#d88" strokeWidth="2" strokeDasharray="2 3" />
        <path d="M8 9H12M8 13H12M8 17H12M8 21H12" stroke="#aaa" />
        <path d="M13 4V35" stroke="#ccc" />
        <path d="M15 8H28M15 16H26M17 20H30" stroke="#aaa" />
        <circle cx="31" cy="29" r="5.500" fill="#7fd64a" />
        <circle cx="36" cy="33" r="4" fill="#eee" />
      </>
    ),
  },
  {
    name: "Finder 窗口",
    art: (
      <>
        <rect x="0" y="-1" width="41" height="41" fill="#3a3b3b" />
        <path d="M13 3H41V40H13Z" fill="#272828" />
        <path d="M2 4V35M14 2V38M17 5V36" stroke="#7a7a7a" strokeDasharray="1 2" strokeWidth="2" />
        <path d="M20 5V34" stroke="#555" strokeDasharray="1 2" strokeWidth="5" />
        <path d="M12 1H40" stroke="#aaa" strokeDasharray="3 2" />
        <path d="M12 35H26" stroke="#49a84c" strokeWidth="2" />
        <rect x="27" y="26" width="13" height="13" fill="#eaf1f8" />
        <path d="M27 26H34L33 34 35 39H27Z" fill="#1e9bf3" />
      </>
    ),
  },
  {
    name: "废纸篓",
    art: (
      <>
        <path d="M5 4H36L32 37Q20 42 10 37Z" fill="#44494c" />
        <ellipse cx="20.500" cy="4" rx="15.500" ry="3" fill="#33383b" stroke="#62686b" />
        <ellipse cx="21" cy="36" rx="10" ry="3" fill="#585e61" />
      </>
    ),
  },
];

function DockGroup({ items }: { items: DockItem[] }) {
  return (
    <>
      {items.map((it) => (
        <button key={it.name} aria-label={it.name} className="flex h-12 items-center gap-1">
          <svg viewBox="0 0 40 40" className="size-10 overflow-visible" fill="none">
            {it.art}
          </svg>
          {it.dot && <span className="size-1.5 rounded-full bg-[#dfe3e6]" />}
        </button>
      ))}
    </>
  );
}

function Dock() {
  return (
    <aside className="absolute top-[29px] right-0 flex w-[67px] flex-col rounded-l-[10px] border border-r-0 border-[#3b4147] bg-[linear-gradient(#7c8590,#929598_17%,#63686e_34%,#454d50_50%,#363835_68%,#21251f)] pt-1.5 pb-1.5 pl-2.5">
      <DockGroup items={APPS} />
      <hr className="mt-2.5 mb-2.5 ml-2 h-0.5 w-[30px] border-0 bg-[#9ba0a3]" />
      <DockGroup items={RUNNING} />
      <hr className="mt-2.5 mb-2.5 h-0.5 w-[46px] border-0 bg-[#7f8381]" />
      <DockGroup items={RECENT} />
    </aside>
  );
}

/* ---------- Annotation arrows ---------- */

function Arrows() {
  return (
    <svg viewBox="0 0 2560 1600" className="pointer-events-none absolute inset-0 z-40 h-full w-full" fill="#ff431b">
      <path d="M280 28Q282 23 285 28L328 113 338 109 333 143 303 122 316 121Z" />
      <path d="M382 145 970 235 968 217 1013 256 958 279 966 262 380 157Q372 151 382 145Z" />
      <path d="M943 820 1920 1033 1919 1015 1961 1057 1904 1077 1914 1060 942 831Q934 825 943 820Z" />
    </svg>
  );
}

export default function App() {
  return (
    <div className={`${FONT} relative flex h-screen w-full flex-col overflow-hidden bg-black`}>
      <MenuBar />
      <main className="relative flex-1 bg-[linear-gradient(#8398a8,#7f8488_20%,#7a7d80_28%,#2f3539_38%,#161b1b_70%,#10140f)]">
        <span className="absolute top-[1112px] right-[67px] h-[54px] w-1.5 bg-[#a9a9a9]" />
        <NotesWindow />
        <EditorWindow />
        <Dock />
      </main>
      <Arrows />
    </div>
  );
}
